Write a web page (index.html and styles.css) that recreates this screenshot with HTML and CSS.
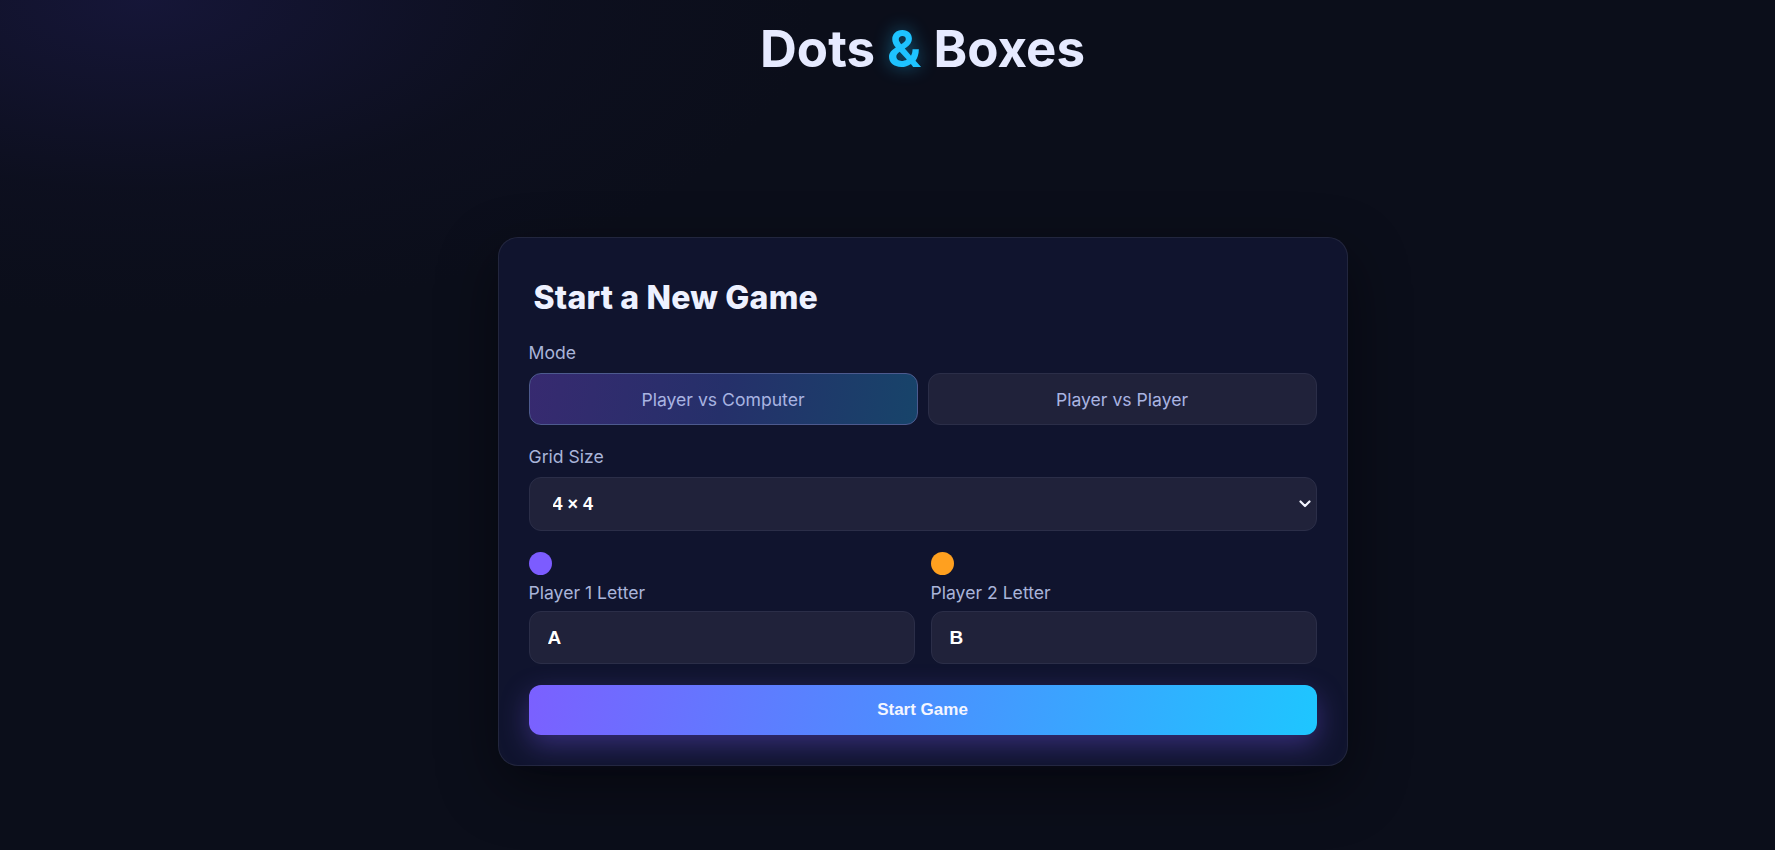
FILE: index.html
```html
<!DOCTYPE html>
<html lang="en">
<head>
<meta charset="utf-8">
<title>Dots &amp; Boxes</title>
<link rel="stylesheet" href="styles.css">
</head>
<body>
<div class="page">
  <h1 class="title">Dots <span class="amp">&amp;</span> Boxes</h1>
  <main class="card">
    <h2 class="card-title">Start a New Game</h2>
    <div class="field">
      <div class="label">Mode</div>
      <div class="mode-row">
        <button class="mode-btn active">Player vs Computer</button>
        <button class="mode-btn">Player vs Player</button>
      </div>
    </div>
    <div class="field">
      <label class="label" for="grid">Grid Size</label>
      <select id="grid" class="select">
        <option>3 × 3</option>
        <option selected>4 × 4</option>
        <option>5 × 5</option>
        <option>6 × 6</option>
      </select>
    </div>
    <div class="players">
      <div class="player">
        <span class="dot dot-p1"></span>
        <label class="label label-tight" for="p1">Player 1 Letter</label>
        <input id="p1" class="input" type="text" value="A" maxlength="1">
      </div>
      <div class="player">
        <span class="dot dot-p2"></span>
        <label class="label label-tight" for="p2">Player 2 Letter</label>
        <input id="p2" class="input" type="text" value="B" maxlength="1">
      </div>
    </div>
    <button class="start-btn">Start Game</button>
  </main>
</div>
</body>
</html>
```

FILE: styles.css
```css
* { box-sizing: border-box; }

html, body {
  margin: 0;
  height: 100%;
}

body {
  font-family: Inter, "Noto Sans", sans-serif;
  background:
    radial-gradient(ellipse 900px 420px at 8% 0%, rgba(30, 28, 80, 0.55) 0%, rgba(20, 20, 50, 0.2) 45%, transparent 75%),
    #0b0e1a;
  color: #e6eaff;
}

.page {
  padding-left: 70px;
  display: flex;
  flex-direction: column;
  align-items: center;
}

.title {
  margin: 19px 0 0;
  font-size: 51px;
  font-weight: 700;
  line-height: 60px;
  color: #e6eaff;
}

.amp {
  color: #1ec3ff;
  text-shadow: 0 0 18px rgba(30, 195, 255, 0.45);
}

.card {
  margin-top: 158px;
  width: 850px;
  padding: 30px;
  border: 1px solid rgba(255, 255, 255, 0.08);
  border-radius: 20px;
  background: #10142e;
  box-shadow: 0 20px 60px rgba(0, 0, 0, 0.45);
  display: flex;
  flex-direction: column;
}

.card-title {
  margin: 10px 0 0 5px;
  font-size: 32px;
  font-weight: 800;
  line-height: 39px;
  letter-spacing: 0.2px;
  color: #eef1ff;
}

.field {
  display: flex;
  flex-direction: column;
  gap: 8px;
  margin-top: 20px;
}

.card-title + .field { margin-top: 24px; }

.label {
  font-size: 17.6px;
  line-height: 24px;
  color: #a9b4da;
}

.mode-row {
  display: flex;
  gap: 10px;
}

.mode-btn {
  flex: 1;
  height: 52px;
  border-radius: 12px;
  border: 1px solid #2b2e48;
  background: #20223a;
  color: #a9b4e2;
  font-family: Inter, "Noto Sans", sans-serif;
  font-size: 17.6px;
  cursor: pointer;
}

.mode-btn.active {
  background: linear-gradient(100deg, #372a70 0%, #25306a 50%, #17446a 100%);
  border-color: #4d5a8e;
}

.select {
  appearance: none;
  -webkit-appearance: none;
  height: 54px;
  width: 100%;
  border-radius: 12px;
  border: 1px solid #2b2e48;
  background-color: #20223a;
  background-image: url("data:image/svg+xml;utf8,<svg xmlns='http://www.w3.org/2000/svg' width='12' height='8' viewBox='0 0 12 8'><path d='M1.5 1.5 L6 6 L10.5 1.5' fill='none' stroke='%23f2f4ff' stroke-width='2.2' stroke-linecap='round' stroke-linejoin='round'/></svg>");
  background-repeat: no-repeat;
  background-position: right 5px center;
  color: #ffffff;
  font-family: "Liberation Sans", Arial, sans-serif;
  font-weight: 700;
  font-size: 18px;
  padding: 0 20px 0 23px;
}

.players {
  display: grid;
  grid-template-columns: 1fr 1fr;
  column-gap: 16px;
  margin-top: 21px;
}

.player {
  display: flex;
  flex-direction: column;
  align-items: flex-start;
}

.dot {
  width: 23px;
  height: 23px;
  border-radius: 50%;
}

.dot-p1 { background: #7c5cff; }
.dot-p2 { background: #ffa01f; }

.label-tight { margin-top: 6px; }

.input {
  margin-top: 6px;
  width: 100%;
  height: 53px;
  border-radius: 12px;
  border: 1px solid #2b2e48;
  background: #20223a;
  color: #ffffff;
  font-family: "Liberation Sans", Arial, sans-serif;
  font-weight: 700;
  font-size: 19px;
  padding: 0 18px;
  outline: none;
}

.start-btn {
  margin-top: 21px;
  height: 50px;
  border: none;
  border-radius: 12px;
  background: linear-gradient(100deg, #7b60ff 0%, #4f8bff 45%, #1ec6ff 100%);
  color: #f4f6ff;
  font-family: "Liberation Sans", Arial, sans-serif;
  font-weight: 700;
  font-size: 17px;
  box-shadow: 0 10px 28px rgba(124, 92, 255, 0.35);
  cursor: pointer;
}
```
